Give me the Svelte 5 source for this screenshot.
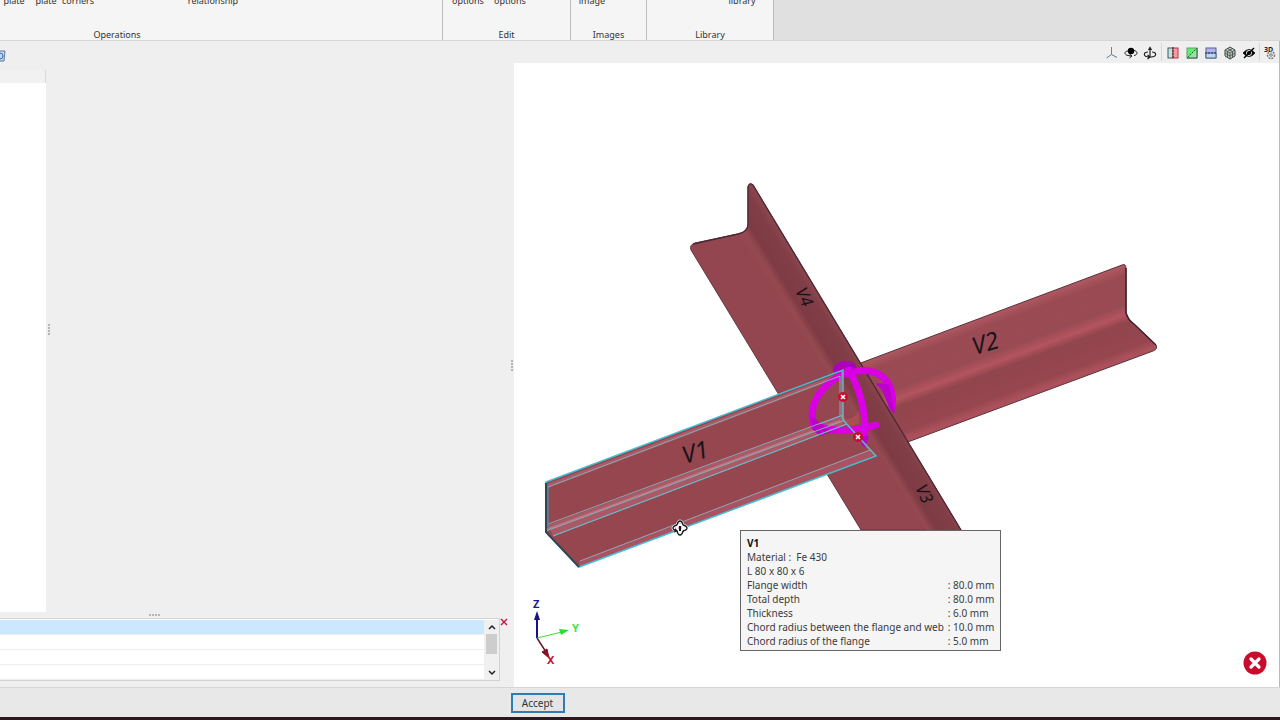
<script>
    const groups = [
        { name: "Operations", kind: "operations", items: ["plate", "plate", "corners", "relationship"] },
        { name: "Edit", kind: "edit", items: ["options", "options"] },
        { name: "Images", kind: "images", items: ["image"] },
        { name: "Library", kind: "library", items: ["library"] },
    ];

    const tools = ["Axes", "Rotate view", "Orbit", "Section", "Face", "Work plane", "Solid", "Hide", "3D settings"];

    const properties = [
        ["Flange width", "80.0 mm"],
        ["Total depth", "80.0 mm"],
        ["Thickness", "6.0 mm"],
        ["Chord radius between the flange and web", "10.0 mm"],
        ["Chord radius of the flange", "5.0 mm"],
    ];

    let selectedRow = $state(0);
    let errorOpen = $state(true);
</script>

<div class="window">
    <header class="ribbon">
        {#each groups as group}
            <section class="group {group.kind}">
                <div class="group-items">
                    {#each group.items as item}
                        <button class="ribbon-button">{item}</button>
                    {/each}
                </div>
                <div class="group-name">{group.name}</div>
            </section>
        {/each}
    </header>

    <main class="body">
        <div class="side">
            <div class="side-tools">
                <button class="refresh" aria-label="Refresh">
                    <svg viewBox="0 0 6 12" width="6" height="12">
                        <path d="M0 1H5L4 11H0" fill="#c3d9f0" stroke="#607890" />
                        <path d="M0 3Q3 3 3 6T0 9" fill="none" stroke="#2868c0" />
                    </svg>
                </button>
            </div>
            <div class="side-main">
                <div class="tree">
                    <div class="tree-head"></div>
                    <div class="tree-body"></div>
                </div>
                <div class="grip vertical"><i></i><i></i><i></i><i></i></div>
                <div class="details"></div>
                <div class="grip vertical outer"><i></i><i></i><i></i><i></i></div>
            </div>
            <div class="grip horizontal"><i></i><i></i><i></i><i></i></div>
            <div class="messages">
                <div class="message-box">
                    <table aria-label="Messages">
                        <tbody>
                            {#each [0, 1, 2, 3] as row}
                                <tr class:selected={selectedRow === row} onclick={() => (selectedRow = row)}><td></td></tr>
                            {/each}
                        </tbody>
                    </table>
                    <div class="scroll">
                        <button aria-label="Scroll up">
                            <svg viewBox="0 0 8 6" width="8" height="6"><path d="M1 5L4 2L7 5" /></svg>
                        </button>
                        <div class="thumb"></div>
                        <button aria-label="Scroll down">
                            <svg viewBox="0 0 8 6" width="8" height="6"><path d="M1 1L4 4L7 1" /></svg>
                        </button>
                    </div>
                </div>
                <button class="close" aria-label="Close messages">
                    <svg viewBox="0 0 8 8" width="8" height="8"><path d="M1 1L7 7M7 1L1 7" stroke="#c41240" stroke-width="1.4" /></svg>
                </button>
            </div>
        </div>

        <div class="view">
            <div class="view-tools">
                {#each tools as tool, i}
                    {#if i === 3 || i === 8}<span class="divider"></span>{/if}
                    <button class="tool" aria-label={tool}>
                        <svg viewBox="0 0 14 14" width="14" height="14" fill="none" stroke="#222">
                            {#if i === 0}
                                <path d="M6.500 1V8.500" stroke="#4a9a72" />
                                <path d="M6.500 8.500L1.500 12" stroke="#5c7f92" />
                                <path d="M6.500 8.500L12 11.500" stroke="#66717c" />
                            {:else if i === 1}
                                <circle cx="7" cy="5" r="3.200" fill="#000" stroke="none" />
                                <path d="M4 5C0 5 0 9 4 9.500L7 10M5.500 8L8 10L5.500 12M10 4.500C14 5 14 9 10 9.500" />
                            {:else if i === 2}
                                <path d="M7 12V2M5.500 4L7 1.500L8.500 4" stroke-width="1.200" />
                                <path d="M5 6C0 6 0 11 6 11M9 6C14 6 14 11 8 11M4.500 9L7 11L4.500 13" stroke-width="1.200" />
                            {:else if i === 3}
                                <rect x="2" y="2" width="5" height="10" fill="#c2e2e1" stroke="#435c60" />
                                <rect x="7" y="2" width="5" height="10" fill="#ef9da6" stroke="#c92f42" />
                                <path d="M7 1V13" stroke="#333" stroke-dasharray="2 1" />
                            {:else if i === 4}
                                <rect x="2" y="2" width="10" height="10" fill="#5cf06c" stroke="#77927c" />
                                <path d="M3 12L12 3V12Z" fill="#9fdcb0" stroke="none" />
                                <path d="M2.500 11.500L11.500 2.500" stroke="#245f37" stroke-dasharray="2 1" />
                                <path d="M2 12H12V2" stroke="#245f37" />
                            {:else if i === 5}
                                <rect x="2" y="2" width="10" height="10" fill="#b5b4ec" stroke="#536487" />
                                <path d="M2 7H12V12H2Z" fill="#b8d9ed" stroke="#536487" />
                                <path d="M1 7H13" stroke="#25285c" stroke-dasharray="2 1" />
                            {:else if i === 6}
                                <path d="M2 4L7 1L12 4V10L7 13L2 10Z" fill="#b9cfc4" stroke="#444" />
                                <path d="M2 4L7 7L12 4M7 7V13M2 7L7 10L12 7M4.500 2.500L9.500 5.500V11.500M9.500 2.500L4.500 5.500V11.500" stroke="#444" stroke-width=".8" />
                            {:else if i === 7}
                                <path d="M1 7Q7 0 13 7Q7 14 1 7Z" fill="#000" />
                                <circle cx="7" cy="7" r="2.500" stroke="#eee" />
                                <circle cx="7" cy="7" r="1.500" fill="#000" stroke="none" />
                                <path d="M2 12L12 2" stroke="#000" stroke-width="1.500" />
                            {:else}
                                <text x="1" y="6" font-size="7" font-weight="700" fill="#222" stroke="none">3D</text>
                                <circle cx="8" cy="9" r="3.500" stroke-dasharray="2 1" stroke="#777" stroke-width="1.500" />
                                <circle cx="8" cy="9" r="1.300" stroke="#777" />
                            {/if}
                        </svg>
                    </button>
                {/each}
            </div>

            <div class="canvas">
                <svg class="scene" viewBox="514 63 765 624" role="img" aria-label="Joint with four angle members">
                    <defs>
                        <linearGradient id="upright" gradientUnits="userSpaceOnUse" x1="812" y1="340" x2="838" y2="324">
                            <stop offset="0" stop-color="#944850" />
                            <stop offset=".22" stop-color="#7f3b44" />
                            <stop offset=".75" stop-color="#823e47" />
                            <stop offset="1" stop-color="#8c464f" />
                        </linearGradient>
                        <linearGradient id="right" gradientUnits="userSpaceOnUse" x1="995" y1="314" x2="1025" y2="395">
                            <stop offset="0" stop-color="#ad5760" />
                            <stop offset=".1" stop-color="#9b4a54" />
                            <stop offset=".42" stop-color="#994b54" />
                            <stop offset=".53" stop-color="#b4545f" />
                            <stop offset=".62" stop-color="#91454d" />
                            <stop offset=".91" stop-color="#96464f" />
                            <stop offset="1" stop-color="#ac515c" />
                        </linearGradient>
                    </defs>

                    <!-- V2 -->
                    <path d="M858 364L1122 265Q1126 263 1126 269V313Q1128 320 1134 324L1156 345Q1158 349 1153 351L905 443L875 415Z" fill="url(#right)" stroke="#59323c" />
                    <path d="M1126 268V313Q1128 320 1134 324L1156 345" fill="none" stroke="#40222b" stroke-width="1.500" />

                    <!-- V4 and V3, one continuous member -->
                    <path d="M691 250Q689 245 695 243L738 234Q748 232 748 224V187Q749 182 753 185L961 530H861Z" fill="#934650" stroke="#633741" />
                    <path d="M748 230V187Q749 182 753 185L961 530H927L740 234Z" fill="url(#upright)" />
                    <path d="M693 244L738 234Q748 232 748 224V187Q749 182 753 185L961 530" fill="none" stroke="#4c2a33" stroke-width="1.300" />

                    <!-- V1, selected -->
                    <path d="M546 482L843 370V418L876 456L579 567L546 532Z" fill="#96464f" />
                    <path d="M547 484L843 372V376L548 488Z" fill="#a65c69" />
                    <path d="M548 525L843 415L848 424L553 536Z" fill="#aa5967" />
                    <path d="M579 561L870 450L876 456L579 567Z" fill="#a95362" />
                    <path d="M546 530L843 420" stroke="#b97883" stroke-width="2" />
                    <path d="M840 420Q855 420 859 411V423Q848 430 840 420Z" fill="#a75051" />
                    <text class="member" transform="translate(685 464) rotate(-17)" font-size="24">V1</text>
                    <text class="member" transform="translate(975 355) rotate(-17)" font-size="24">V2</text>
                    <text class="member" transform="translate(795 291) rotate(64)" font-size="17">V4</text>
                    <text class="member" transform="translate(915 488) rotate(64)" font-size="17">V3</text>

                    <!-- rotation rings -->
                    <g fill="none" stroke="#d800e3" stroke-width="7" stroke-linecap="round">
                        <path d="M837 369Q843 362 852 367" stroke="#ad00bd" stroke-width="8" />
                        <path d="M847 373C825 381 806 403 814 426" />
                        <path d="M821 427C834 432 856 431 876 425" />
                        <path d="M849 370C860 390 868 413 864 441" stroke="#db00e5" />
                        <path d="M848 374C875 363 896 380 892 407" />
                    </g>
                    <path d="M810 415L832 432L820 436L813 430Z" fill="#bb00cb" />
                    <path d="M875 383L889 384L895 414L890 409L882 390Z" fill="#bd00cf" />
                    <path d="M860 436H869L865 447Q860 445 860 436Z" fill="#b800c7" />

                    <g fill="none" stroke="#65b7ca">
                        <path d="M546 482L843 370V420L876 456L579 567L546 532Z" stroke="#45bdd1" stroke-width="1.500" />
                        <path d="M548 487L840 376V416L548 524M546 531L843 421M553 536L847 424L870 450L580 561M842 371V418L847 424M870 450L876 456" stroke="#8ea7b1" />
                        <path d="M819 424L843 415M553 536L847 424" />
                        <path d="M546 483V532L579 567" stroke="#304451" stroke-width="2" />
                        <path d="M548 486V530" stroke="#559eaf" />
                    </g>

                    {#each [[843, 397], [858, 437]] as [x, y]}
                        <circle cx={x} cy={y} r="5" fill="#c80d30" />
                        <path d="M{x - 2} {y - 2}l4 4m0 -4l-4 4" stroke="#fff" stroke-width="1.600" />
                    {/each}

                    <!-- orbit cursor -->
                    <g fill="none" stroke="#fff" stroke-width="3">
                        <ellipse cx="680" cy="528" rx="3" ry="7" />
                        <ellipse cx="680" cy="528" rx="7" ry="3" />
                    </g>
                    <g fill="none" stroke="#151515" stroke-width="1.300">
                        <path d="M677 525Q678 521 680 521T683 525M677 531Q678 535 680 535T683 531M682 533L684 530" />
                        <path d="M677 525Q673 526 673 528T677 531M683 525Q687 526 687 528T683 531M674 532L677 531L675 529" />
                        <path d="M680 526V531" stroke-width="2" />
                    </g>

                    <!-- axis triad -->
                    <path d="M537 638V618" stroke="#17118b" stroke-width="2" />
                    <path d="M537 611L534 620H540Z" fill="#17118b" />
                    <path d="M537 638L562 632" stroke="#42df45" stroke-width="1.200" />
                    <path d="M569 630L559 629L561 635Z" fill="#2ddd31" />
                    <path d="M537 638L546 652" stroke="#641a23" stroke-width="1.500" />
                    <path d="M549 658L542 652L547 649Z" fill="#870f20" stroke="#870f20" />
                    <g class="axis-name">
                        <text x="533" y="608" fill="#20188e">Z</text>
                        <text x="572" y="632" fill="#44e348">Y</text>
                        <text x="547" y="664" fill="#c51235">X</text>
                    </g>
                </svg>

                <div class="tooltip" role="tooltip">
                    <strong>V1</strong>
                    <div>Material :&nbsp; Fe 430</div>
                    <div>L 80 x 80 x 6</div>
                    <table>
                        <tbody>
                            {#each properties as [label, value]}
                                <tr><th scope="row">{label}</th><td>: {value}</td></tr>
                            {/each}
                        </tbody>
                    </table>
                </div>

                {#if errorOpen}
                    <button class="error" aria-label="Dismiss error" onclick={() => (errorOpen = false)}>
                        <svg viewBox="0 0 24 24" width="24" height="24">
                            <circle cx="12" cy="12" r="11.500" fill="#c90c2b" />
                            <path d="M8 8L16 16M16 8L8 16" stroke="#fff" stroke-width="3.200" stroke-linecap="round" />
                        </svg>
                    </button>
                {/if}
            </div>
        </div>
    </main>

    <footer class="actions">
        <button class="accept">Accept</button>
    </footer>
</div>

<style>
    .window {
        display: flex;
        flex-direction: column;
        min-height: 100vh;
        box-sizing: border-box;
        border-bottom: 3px solid #2c171d;
        background: #efefef;
        color: #333;
        font-family: "Noto Sans", "Open Sans", sans-serif;
        font-size: 9px;
        line-height: 14px;
        overflow: hidden;
    }

    button {
        padding: 0;
        border: 0;
        background: none;
        color: inherit;
        font: inherit;
    }

    svg {
        display: block;
    }

    /* Ribbon, scrolled up so only the last label line shows */
    .ribbon {
        display: flex;
        height: 40px;
        background: #e0e0e0;
        border-bottom: 1px solid #d6d6d6;
    }

    .group {
        display: flex;
        flex-direction: column;
        justify-content: space-between;
        box-sizing: border-box;
        height: 40px;
        background: #f5f5f5;
        border-right: 1px solid #bcbcbc;
    }

    .operations {
        width: 443px;
    }

    .edit {
        width: 128px;
    }

    .images {
        width: 76px;
    }

    .library {
        width: 127px;
    }

    .group-items {
        display: flex;
        margin-top: -6px;
    }

    .group-name {
        text-align: center;
        line-height: 10px;
    }

    .ribbon-button {
        width: 42px;
        text-align: center;
    }

    .operations .ribbon-button {
        width: 32px;
    }

    .operations .group-items {
        margin-left: -2px;
    }

    .operations .ribbon-button:last-child {
        width: 60px;
        margin-left: 89px;
    }

    .operations .group-name {
        padding-right: 208px;
    }

    .edit .group-items {
        padding-left: 4px;
    }

    .library .group-items {
        justify-content: flex-end;
        padding-right: 10px;
    }

    /* Left side */
    .body {
        display: flex;
        flex: 1;
    }

    .side {
        display: flex;
        flex-direction: column;
        flex: 0 0 514px;
    }

    .side-tools {
        display: flex;
        align-items: center;
        height: 29px;
    }

    .side-main {
        display: flex;
        flex: 1;
    }

    .tree {
        display: flex;
        flex-direction: column;
        width: 46px;
    }

    .tree-head {
        height: 13px;
        background: #f1f1f1;
        border-right: 1px solid #d8d8d8;
    }

    .tree-body {
        flex: 1;
        background: #fff;
    }

    .details {
        flex: 1;
    }

    .grip {
        display: flex;
        align-items: center;
        justify-content: center;
        gap: 1px;
    }

    .grip i {
        width: 2px;
        height: 2px;
        background: #b5b5b5;
    }

    .vertical {
        flex-direction: column;
        width: 6px;
        padding-bottom: 24px;
    }

    .outer {
        width: 5px;
        padding-top: 48px;
        padding-bottom: 0;
    }

    .horizontal {
        height: 6px;
        padding-right: 206px;
    }

    .messages {
        display: flex;
        align-items: flex-start;
        padding-bottom: 6px;
    }

    .message-box {
        display: flex;
        flex: 0 0 499px;
        padding-top: 1px;
        border: 1px solid #d2d2d2;
        border-left: 0;
        background: #fff;
    }

    .message-box table {
        flex: 1;
        border-collapse: collapse;
    }

    .message-box td {
        height: 14px;
        padding: 0;
        border-bottom: 1px solid #eee;
    }

    .selected {
        background: #cce8ff;
    }

    .scroll {
        display: flex;
        flex-direction: column;
        width: 15px;
        background: #f0f0f0;
    }

    .scroll button {
        display: grid;
        place-items: center;
        height: 14px;
    }

    .scroll path {
        fill: none;
        stroke: #222;
        stroke-width: 1.5;
    }

    .thumb {
        width: 11px;
        height: 20px;
        margin: 0 auto auto;
        background: #cdcdcd;
    }

    /* Model view */
    .view {
        display: flex;
        flex: 1;
        flex-direction: column;
        border-right: 1px solid #b9b9b9;
    }

    .view-tools {
        display: flex;
        align-items: flex-end;
        justify-content: flex-end;
        height: 22px;
    }

    .tool {
        display: grid;
        place-items: center;
        width: 18px;
        height: 20px;
    }

    .tool + .tool {
        margin-left: 1px;
    }

    .divider {
        width: 1px;
        height: 18px;
        margin: 0 2px 2px;
        background: #d5d5d5;
    }

    .divider:last-of-type {
        margin: 0 1px 2px;
    }

    .canvas {
        position: relative;
        flex: 1;
        background: #fff;
    }

    .scene {
        position: absolute;
        width: 100%;
        height: 100%;
    }

    .member {
        fill: #191419;
        font-style: italic;
    }

    .axis-name {
        font-size: 11px;
        font-weight: 700;
    }

    .tooltip {
        position: absolute;
        top: 467px;
        left: 226px;
        padding: 5px 6px 2px;
        border: 1px solid #666;
        background: #f5f5f5;
        color: #3b3b3b;
        font-size: 10px;
        line-height: 14px;
        white-space: nowrap;
    }

    .tooltip strong {
        display: block;
        color: #111;
    }

    .tooltip table {
        border-collapse: collapse;
    }

    .tooltip th {
        padding: 0 4px 0 0;
        font-weight: 400;
        text-align: left;
    }

    .tooltip td {
        padding: 0;
    }

    .error {
        position: absolute;
        right: 12px;
        bottom: 12px;
    }

    .actions {
        display: flex;
        justify-content: center;
        align-items: center;
        height: 29px;
        padding-right: 205px;
        background: #e8e8e8;
        border-top: 1px solid #d5d5d5;
    }

    .accept {
        width: 54px;
        height: 20px;
        border: 2px solid #2f7db5;
        background: #e4e4e4;
        font-size: 10px;
        line-height: 14px;
    }
</style>
